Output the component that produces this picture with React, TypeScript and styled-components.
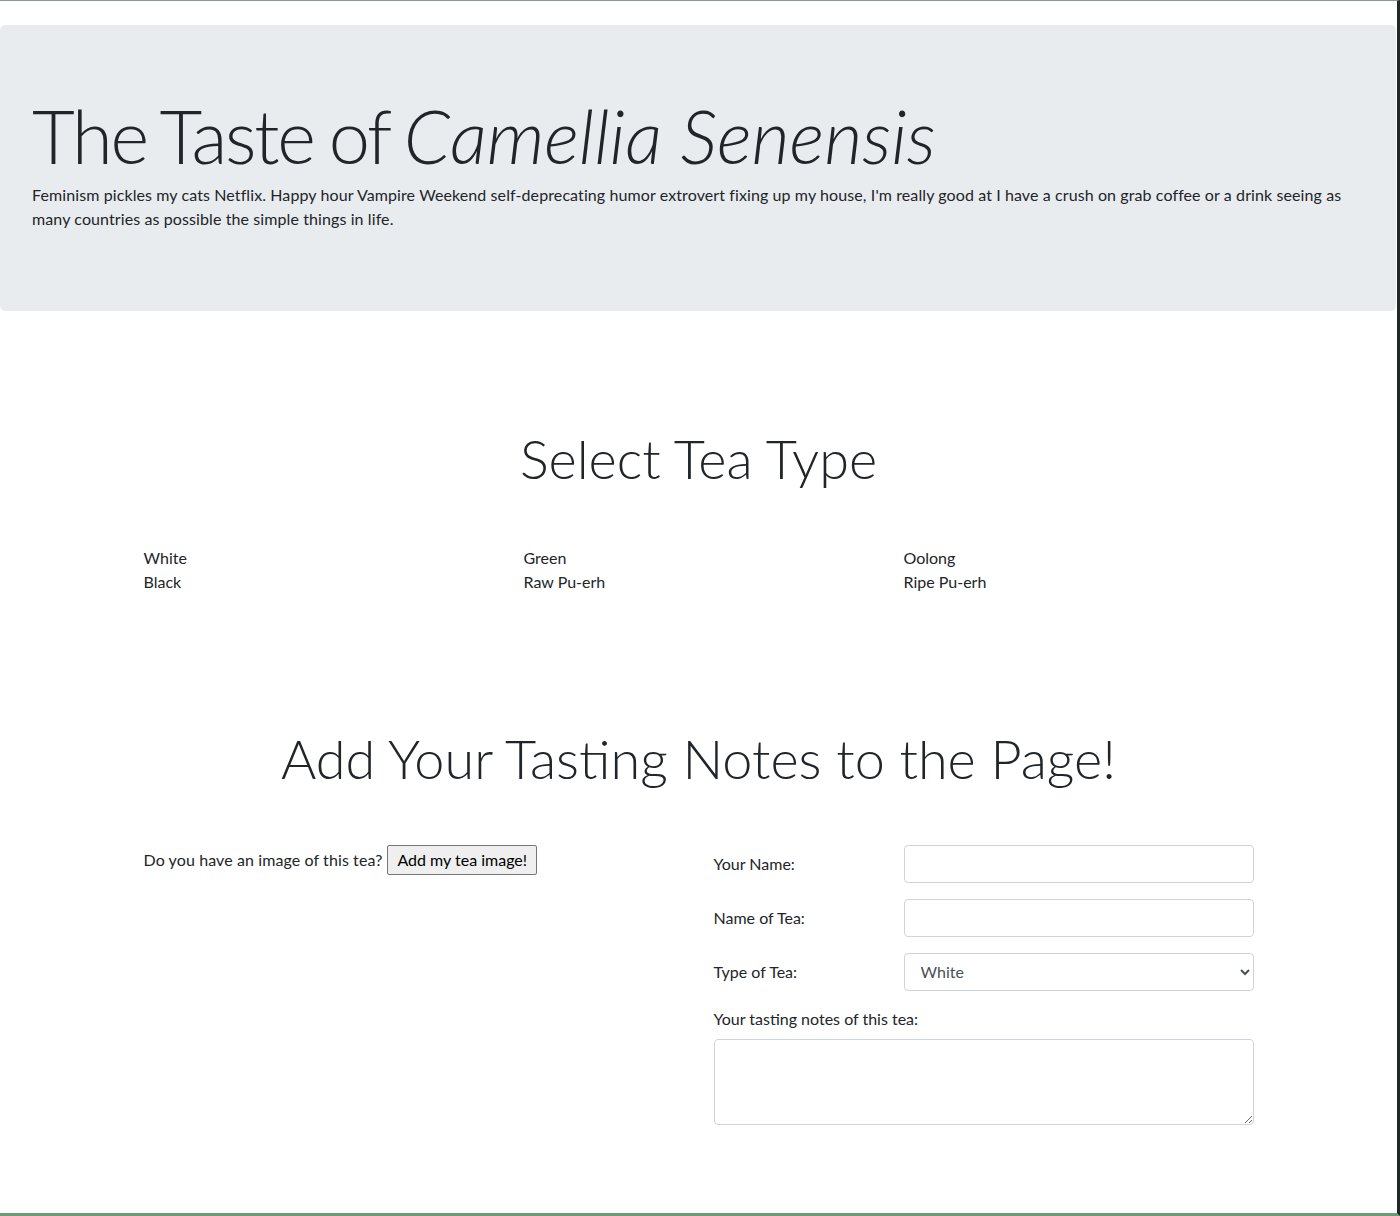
import React from "react";
import styled, { createGlobalStyle } from "styled-components";

const GlobalStyle = createGlobalStyle`
  html, body {
    margin: 0;
    padding: 0;
    background: #ffffff;
  }
  body {
    font-family: Lato, "Open Sans", sans-serif;
    font-size: 16px;
    line-height: 1.5;
    color: #212529;
  }
  *, *::before, *::after {
    box-sizing: border-box;
  }
`;

// 창 테두리까지 포함한 전체 프레임
const Frame = styled.div`
  width: 1400px;
  height: 1216px;
  overflow: hidden;
  border-top: 1px solid #8a9a90;
  border-right: 3px solid #1d2a25;
  border-bottom: 3px solid #6f9a78;
`;

// 상단 점보트론
const Jumbotron = styled.header`
  margin: 24px 1px 0 0;
  padding: 64px 32px;
  background: #e9ecef;
  border-radius: 5px;
`;

const Title = styled.h1`
  margin: 0;
  font-size: 74px;
  font-weight: 300;
  line-height: 94px;
  letter-spacing: -2.2px;
  word-spacing: -3px;

  em {
    font-style: italic;
    letter-spacing: -0.1px;
    word-spacing: 0;
  }
`;

const Lead = styled.p`
  margin: 0 0 16px;
  font-size: 16px;
  line-height: 24px;
  letter-spacing: 0.1px;
`;

const Container = styled.main`
  width: 1140px;
  margin: 0 auto;
  padding: 0 15px;
`;

const Section = styled.section<{ $top: number }>`
  margin-top: ${(p) => p.$top}px;
`;

const SectionTitle = styled.h2`
  margin: 0;
  text-align: center;
  font-size: 54px;
  font-weight: 300;
  line-height: 1.2;
`;

// 차 종류 3열
const TeaGrid = styled.div`
  display: grid;
  grid-template-columns: repeat(3, 1fr);
  column-gap: 30px;
  margin-top: 54px;
`;

const TeaList = styled.ul`
  margin: 0;
  padding: 0;
  list-style: none;
`;

const TeaItem = styled.li`
  line-height: 24px;
`;

// 테이스팅 노트 폼
const FormGrid = styled.div`
  display: grid;
  grid-template-columns: 1fr 1fr;
  column-gap: 30px;
  margin-top: 53px;
`;

const ImageAsk = styled.div`
  display: flex;
  align-items: center;
  gap: 5px;
  height: 30px;
`;

const AskText = styled.span`
  letter-spacing: 0.1px;
`;

const FileButton = styled.button`
  font-family: inherit;
  font-size: 16px;
  height: 30px;
  padding: 0 9px;
  color: #000;
  background: #efefef;
  border: 1px solid #767676;
  border-radius: 2px;
`;

const FieldRow = styled.div`
  display: grid;
  grid-template-columns: 160px 1fr;
  column-gap: 30px;
  align-items: center;
  margin-bottom: 16px;
`;

const Label = styled.label`
  font-size: 16px;
`;

const BlockLabel = styled.label`
  display: block;
  font-size: 16px;
  line-height: 24px;
  margin-bottom: 8px;
`;

const Input = styled.input`
  display: block;
  width: 100%;
  height: 38px;
  padding: 6px 12px;
  font-family: inherit;
  font-size: 16px;
  color: #495057;
  background: #fff;
  border: 1px solid #ced4da;
  border-radius: 4px;
`;

const Select = styled.select`
  display: block;
  width: 100%;
  height: 38px;
  padding: 6px 12px;
  font-family: inherit;
  font-size: 16px;
  color: #495057;
  background: #fff;
  border: 1px solid #ced4da;
  border-radius: 4px;
`;

const TextArea = styled.textarea`
  display: block;
  width: 100%;
  height: 86px;
  padding: 6px 12px;
  font-family: inherit;
  font-size: 16px;
  color: #495057;
  border: 1px solid #ced4da;
  border-radius: 4px;
`;

const teaColumns = [
  ["White", "Black"],
  ["Green", "Raw Pu-erh"],
  ["Oolong", "Ripe Pu-erh"],
];

const teaTypes = ["White", "Green", "Oolong", "Black", "Raw Pu-erh", "Ripe Pu-erh"];

const App: React.FC = () => {
  return (
    <Frame>
      <GlobalStyle />
      <Jumbotron>
        <Title>
          The Taste of <em>Camellia Senensis</em>
        </Title>
        <Lead>
          Feminism pickles my cats Netflix. Happy hour Vampire Weekend
          self-deprecating humor extrovert fixing up my house, I'm really good
          at I have a crush on grab coffee or a drink seeing as many countries
          as possible the simple things in life.
        </Lead>
      </Jumbotron>

      <Container>
        <Section $top={116}>
          <SectionTitle>Select Tea Type</SectionTitle>
          <TeaGrid>
            {teaColumns.map((col, i) => (
              <TeaList key={i}>
                {col.map((tea) => (
                  <TeaItem key={tea}>{tea}</TeaItem>
                ))}
              </TeaList>
            ))}
          </TeaGrid>
        </Section>

        <Section $top={133}>
          <SectionTitle>Add Your Tasting Notes to the Page!</SectionTitle>
          <FormGrid>
            <div>
              <ImageAsk>
                <AskText>Do you have an image of this tea?</AskText>
                <FileButton type="button">Add my tea image!</FileButton>
              </ImageAsk>
            </div>
            <form>
              <FieldRow>
                <Label htmlFor="name">Your Name:</Label>
                <Input id="name" type="text" />
              </FieldRow>
              <FieldRow>
                <Label htmlFor="tea">Name of Tea:</Label>
                <Input id="tea" type="text" />
              </FieldRow>
              <FieldRow>
                <Label htmlFor="type">Type of Tea:</Label>
                <Select id="type" defaultValue="White">
                  {teaTypes.map((t) => (
                    <option key={t}>{t}</option>
                  ))}
                </Select>
              </FieldRow>
              <BlockLabel htmlFor="notes">Your tasting notes of this tea:</BlockLabel>
              <TextArea id="notes" />
            </form>
          </FormGrid>
        </Section>
      </Container>
    </Frame>
  );
};

export default App;
